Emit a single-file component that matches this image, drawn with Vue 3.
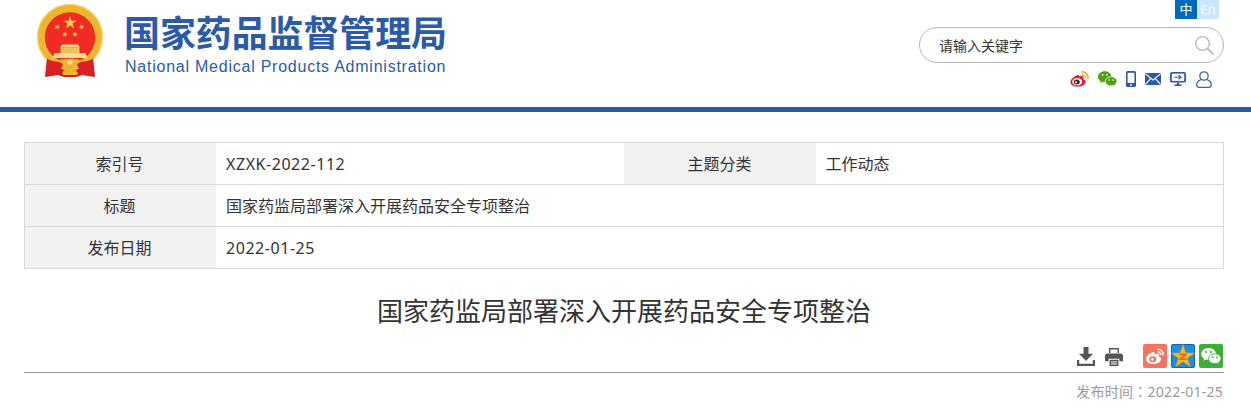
<script setup>
function star(cx, cy, r, rot = 0) {
  const pts = []
  for (let i = 0; i < 10; i++) {
    const a = ((-90 + rot + i * 36) * Math.PI) / 180
    const d = i % 2 ? r * 0.382 : r
    pts.push((cx + d * Math.cos(a)).toFixed(2) + ',' + (cy + d * Math.sin(a)).toFixed(2))
  }
  return pts.join(' ')
}
const stars = [
  { x: 40, y: 18.8, r: 6.8 },
  { x: 27.3, y: 23, r: 3, rot: 20 },
  { x: 51.7, y: 23, r: 3, rot: -20 },
  { x: 35, y: 30.3, r: 3, rot: 10 },
  { x: 45, y: 30.3, r: 3, rot: -10 }
]
const rows = [
  [
    { label: '索引号', value: 'XZXK-2022-112', latin: true },
    { label: '主题分类', value: '工作动态' }
  ],
  [{ label: '标题', value: '国家药监局部署深入开展药品安全专项整治', wide: true }],
  [{ label: '发布日期', value: '2022-01-25', wide: true, latin: true }]
]
</script>

<template>
  <div class="page">
    <header class="top">
      <div class="brand">
        <svg class="emblem" width="80" height="80" viewBox="0 0 80 80">
          <path d="M17 53 L15 73 L28 71 L34 73 L46 73 L52 71 L65 73 L63 53 Z" fill="#cf1a1f" />
          <circle cx="40" cy="33" r="32.4" fill="#eeb52f" />
          <circle cx="40" cy="33" r="32.4" fill="none" stroke="#f5d262" stroke-width="1.4" />
          <circle cx="40" cy="33.5" r="25.2" fill="#ef2b24" />
          <polygon v-for="(s, i) in stars" :key="i" :points="star(s.x, s.y, s.r, s.rot)" fill="#f8d04a" />
          <path d="M32 40.5 H48 L50 43.5 H30 Z" fill="#f6d98a" />
          <path d="M30.5 43.5 H49.5 V49 H30.5 Z" fill="#eec15c" />
          <path d="M22 54 L25 49 H55 L58 54 Z" fill="#f7dd91" />
          <path d="M17 54.6 C23 59 29 56.6 33 60 L29 71 L17 71 Z" fill="#dc1f21" />
          <path d="M63 54.6 C57 59 51 56.6 47 60 L51 71 L63 71 Z" fill="#dc1f21" />
          <path d="M29 56.5 C33 54 47 54 51 56.5 C49 60 45 60 44 63 L48 69 L47 71 H33 L32 69 L36 63 C35 60 31 60 29 56.5 Z" fill="#edb52e" />
          <circle cx="40" cy="58" r="2.6" fill="#f8dc87" />
        </svg>
        <div class="names">
          <div class="zh">国家药品监督管理局</div>
          <div class="en">National Medical Products Administration</div>
        </div>
      </div>
      <div class="tools">
        <div class="lang">
          <span class="on">中</span>
          <span class="off">En</span>
        </div>
        <div class="search">
          <span class="placeholder">请输入关键字</span>
          <svg width="19" height="19" viewBox="0 0 19 19" fill="none" stroke="#b9b9b9">
            <circle cx="7.5" cy="7.5" r="6.8" stroke-width="1.3" />
            <path d="M12.6 12.6 L18.4 18.4" stroke-width="1.8" />
          </svg>
        </div>
        <div class="links">
          <svg width="19" height="16" viewBox="0 0 19 16">
            <path d="M7.5 4.2 C3.6 5.6 0.4 8.6 0.4 11 C0.4 14 4 15.8 8 15.8 C12.5 15.8 15.6 13 15.6 10.6 C15.6 9 14 8.4 13.2 8.2 C13.8 6.8 13.6 5.6 12.6 5.2 C11.4 4.8 9.6 5.6 9 5.8 C9.4 4.2 8.8 3.8 7.5 4.2 Z" fill="#e6162d" />
            <ellipse cx="7.2" cy="10.8" rx="5" ry="3.7" fill="#fff" />
            <ellipse cx="6.8" cy="11" rx="3" ry="2.5" fill="#333" />
            <circle cx="6" cy="11.2" r="1" fill="#fff" />
            <path d="M11.5 1 C15 0.5 18.5 3.5 18 7.6" fill="none" stroke="#f5a623" stroke-width="1.7" />
            <path d="M12 4 C14 3.7 15.8 5.3 15.4 7.4" fill="none" stroke="#f5a623" stroke-width="1.3" />
          </svg>
          <svg width="19" height="16" viewBox="0 0 19 16">
            <path d="M6.8 0.2 C3 0.2 0 2.7 0 5.7 C0 7.5 1 9 2.6 10 L2 12 L4.3 10.8 C5 11 5.8 11.1 6.8 11.1 C10.5 11.1 13.5 8.6 13.5 5.7 C13.5 2.7 10.5 0.2 6.8 0.2 Z" fill="#4ca30f" />
            <path d="M13 5.8 C9.8 5.8 7.3 7.9 7.3 10.4 C7.3 12.9 9.8 14.9 13 14.9 C13.6 14.9 14.3 14.8 14.9 14.6 L17 15.8 L16.5 13.9 C18 13 19 11.8 19 10.4 C19 7.9 16.2 5.8 13 5.8 Z" fill="#4ca30f" stroke="#fff" stroke-width="0.8" />
            <circle cx="4.6" cy="3.8" r="0.9" fill="#fff" />
            <circle cx="8.8" cy="3.8" r="0.9" fill="#fff" />
            <circle cx="11" cy="9" r="0.8" fill="#fff" />
            <circle cx="15" cy="9" r="0.8" fill="#fff" />
          </svg>
          <svg width="10" height="16" viewBox="0 0 10 16">
            <rect x="0" y="0" width="10" height="16" rx="1.6" fill="#2b5ba8" />
            <rect x="1.6" y="1.8" width="6.8" height="10.2" fill="#fff" />
            <circle cx="5" cy="14" r="1" fill="#fff" />
          </svg>
          <svg width="16" height="12" viewBox="0 0 16 12">
            <rect width="16" height="12" rx="1" fill="#2b5ba8" />
            <path d="M0.5 0.8 L8 7 L15.5 0.8 M0.5 11.4 L5.8 5.4 M15.5 11.4 L10.2 5.4" fill="none" stroke="#fff" stroke-width="1.1" />
          </svg>
          <svg width="16" height="14" viewBox="0 0 16 14">
            <rect x="0" y="0" width="16" height="10.5" rx="1.8" fill="#2b5ba8" />
            <rect x="1.8" y="1.6" width="12.4" height="7.3" fill="#fff" />
            <path d="M4.2 5.2 H11 M8.6 3 L11 5.2 L8.6 7.4" fill="none" stroke="#2b5ba8" stroke-width="1.1" />
            <path d="M6.8 10.5 H9.2 V12.4 H11.5 V14 H4.5 V12.4 H6.8 Z" fill="#2b5ba8" />
          </svg>
          <svg class="user" width="16" height="17" viewBox="0 0 16 17" fill="none" stroke="#3f62ac" stroke-width="1.3">
            <circle cx="8" cy="5" r="4.2" />
            <path d="M5 8.6 C2.6 9.4 0.7 11.4 0.7 14 C0.7 15.4 1.6 16.3 3 16.3 H13 C14.4 16.3 15.3 15.4 15.3 14 C15.3 11.4 13.4 9.4 11 8.6" />
          </svg>
        </div>
      </div>
    </header>
    <div class="rule"></div>

    <main class="content">
      <div class="meta">
        <div v-for="(row, r) in rows" :key="r" class="row">
          <template v-for="cell in row" :key="cell.label">
            <div class="label">{{ cell.label }}</div>
            <div class="value" :class="{ wide: cell.wide, latin: cell.latin }">{{ cell.value }}</div>
          </template>
        </div>
      </div>

      <h1 class="title">国家药监局部署深入开展药品安全专项整治</h1>

      <div class="actions">
        <svg class="act" width="18" height="19" viewBox="0 0 18 19" fill="#555">
          <path d="M6.5 0 H11.5 V6.8 H16 L9 14 L2 6.8 H6.5 Z" />
          <path d="M0 13 H2.2 V16.8 H15.8 V13 H18 V19 H0 Z" />
        </svg>
        <svg class="act print" width="18" height="18" viewBox="0 0 18 18" fill="#555">
          <path d="M4 0 H14 V5 H12.6 V1.4 H5.4 V5 H4 Z" />
          <path d="M2.2 5.4 H15.8 C17 5.4 18 6.4 18 7.6 V13.2 H14.4 V10.8 H3.6 V13.2 H0 V7.6 C0 6.4 1 5.4 2.2 5.4 Z" />
          <path d="M4.6 11.8 H13.4 V18 H4.6 Z M6 13.4 V14.4 H12 V13.4 Z M6 15.4 V16.4 H12 V15.4 Z" fill-rule="evenodd" />
        </svg>
        <svg class="tile first" width="24" height="24" viewBox="0 0 24 24">
          <rect width="24" height="24" rx="2" fill="#f6735f" />
          <path d="M9.5 8.2 C5.6 9.6 3 12.4 3 15 C3 18.2 6.6 20 10.4 20 C15 20 18 17.4 18 15 C18 13.6 16.8 13 15.8 12.6 C16.4 11.2 16.2 10.2 15.2 9.8 C14 9.4 12.4 10 11.6 10.4 C12 8.6 11 7.6 9.5 8.2 Z" fill="#fff" />
          <ellipse cx="9.8" cy="15.2" rx="3.6" ry="3" fill="#f6735f" />
          <circle cx="9.3" cy="15.4" r="1.4" fill="#fff" />
          <path d="M14 5.4 C17.4 4.8 20.6 7.6 20 11.4 M14.6 8 C16.4 7.8 17.8 9 17.6 11" fill="none" stroke="#fff" stroke-width="1.4" />
        </svg>
        <svg class="tile" width="24" height="24" viewBox="0 0 24 24">
          <rect width="24" height="24" rx="2" fill="#1a8fe3" />
          <rect x="0.5" y="0.5" width="23" height="23" rx="2" fill="none" stroke="#1561ad" />
          <polygon :points="star(12, 12.8, 12.2)" fill="#f9bc0c" stroke="#e8991a" stroke-width="0.6" />
          <path d="M8.6 9.6 H15.6 V11.2 L11.6 14.2 H15.8 V16 H8.4 V14.4 L12.4 11.4 H8.6 Z" fill="#dd6a1e" />
        </svg>
        <svg class="tile" width="24" height="24" viewBox="0 0 24 24">
          <rect width="24" height="24" rx="2" fill="#3cb034" />
          <path d="M9.6 4 C5.4 4 2.2 6.7 2.2 10 C2.2 12 3.3 13.6 5 14.7 L4.4 16.8 L6.9 15.5 C7.7 15.7 8.6 15.8 9.6 15.8 C13.8 15.8 17 13.2 17 10 C17 6.7 13.8 4 9.6 4 Z" fill="#fff" />
          <path d="M15.8 9.8 C12.4 9.8 9.6 12 9.6 14.7 C9.6 17.4 12.4 19.6 15.8 19.6 C16.5 19.6 17.2 19.5 17.9 19.3 L20 20.5 L19.5 18.5 C21 17.6 22 16.2 22 14.7 C22 12 19.2 9.8 15.8 9.8 Z" fill="#fff" stroke="#3cb034" stroke-width="0.9" />
          <circle cx="7" cy="8" r="1.1" fill="#3cb034" />
          <circle cx="12" cy="8" r="1.1" fill="#3cb034" />
          <circle cx="13.6" cy="13.4" r="0.9" fill="#3cb034" />
          <circle cx="18" cy="13.4" r="0.9" fill="#3cb034" />
        </svg>
      </div>

      <div class="date">发布时间：2022-01-25</div>
    </main>
  </div>
</template>

<style scoped>
.page {
  width: 1251px;
  height: 415px;
  overflow: hidden;
  background: #fff;
  font-family: "Noto Sans", "Noto Sans CJK SC", sans-serif;
  color: #333;
}
.top {
  height: 107px;
  display: flex;
  justify-content: space-between;
  padding: 0 27px 0 30px;
  box-sizing: border-box;
}
.brand {
  display: flex;
  align-items: flex-start;
}
.emblem {
  display: block;
  flex: none;
  margin-top: 4px;
}
.names {
  margin: 9px 0 0 14px;
  color: #2b5ba8;
}
.zh {
  font-family: "Noto Sans CJK SC", sans-serif;
  font-size: 35.9px;
  font-weight: 700;
  line-height: 44px;
  white-space: nowrap;
  width: 322px;
}
.en {
  font-family: "Liberation Sans", sans-serif;
  font-size: 16px;
  line-height: 20px;
  margin: 4px 0 0 1px;
  letter-spacing: 0.76px;
  white-space: nowrap;
}
.tools {
  width: 305px;
  display: flex;
  flex-direction: column;
  align-items: flex-end;
}
.lang {
  display: flex;
  height: 19px;
  margin-right: 5px;
  font-size: 13px;
  line-height: 18px;
  color: #fff;
  text-align: center;
}
.lang span {
  width: 22px;
}
.on {
  background: #0069bc;
}
.off {
  background: #cce6ff;
}
.search {
  width: 305px;
  height: 36px;
  margin-top: 8px;
  box-sizing: border-box;
  border: 1px solid #b9b9b9;
  border-radius: 18px;
  display: flex;
  align-items: center;
  justify-content: space-between;
  padding: 0 9px 0 19px;
}
.placeholder {
  font-size: 14px;
  color: #333;
}
.links {
  display: flex;
  align-items: center;
  gap: 9px;
  margin: 7px 12px 0 0;
  height: 18px;
}
.links svg {
  display: block;
}
.links .user {
  margin-left: 1px;
}
.rule {
  height: 5px;
  background: #2b5ba8;
}
.content {
  padding: 30px 27px 0 24px;
}
.meta {
  width: 1200px;
  box-sizing: border-box;
  border: 1px solid #d9d9d9;
}
.row {
  display: flex;
  height: 42px;
  border-top: 1px solid #d9d9d9;
  box-sizing: border-box;
}
.row:first-child {
  height: 41px;
  border-top: 0;
}
.label {
  width: 191px;
  flex: none;
  box-sizing: border-box;
  padding-right: 2px;
  background: #f2f2f2;
  display: flex;
  align-items: center;
  justify-content: center;
  font-size: 16px;
  line-height: 40px;
}
.row .label:not(:first-child) {
  width: 192px;
  padding-right: 0;
}
.value {
  width: 408px;
  box-sizing: border-box;
  padding-left: 10px;
  display: flex;
  align-items: center;
  font-size: 16px;
  line-height: 40px;
}
.value.latin {
  letter-spacing: 0.55px;
}
.value.wide {
  flex: 1;
}
.title {
  margin: 24px 0 0;
  width: 1200px;
  text-align: center;
  font-family: "Noto Sans CJK SC", sans-serif;
  font-size: 26px;
  font-weight: 400;
  line-height: 34px;
  color: #333;
}
.actions {
  width: 1200px;
  height: 29px;
  margin-top: 17px;
  padding: 0 1px 0 0;
  box-sizing: border-box;
  border-bottom: 1px solid #999;
  display: flex;
  justify-content: flex-end;
  align-items: flex-start;
  gap: 4px;
}
.act {
  margin-top: 3px;
}
.print {
  margin-left: 6px;
  margin-top: 4px;
}
.first {
  margin-left: 16px;
}
.date {
  width: 1199px;
  text-align: right;
  margin-top: 9px;
  font-family: "Noto Sans", "Noto Sans CJK TC", sans-serif;
  font-size: 14px;
  line-height: 20px;
  letter-spacing: 0.25px;
  color: #999;
}
</style>

<style>
html,
body {
  margin: 0;
  overflow: hidden;
  background: #fff;
}
</style>
